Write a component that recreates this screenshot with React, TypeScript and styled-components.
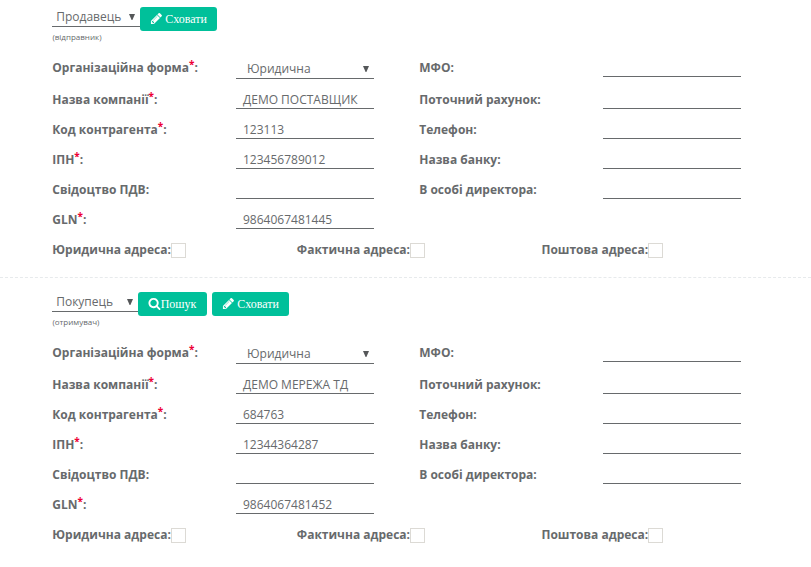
import React from "react";
import styled, { createGlobalStyle } from "styled-components";

const GlobalStyle = createGlobalStyle`
  * { box-sizing: border-box; }
  body {
    margin: 0;
    background: #fff;
    color: #676a6c;
    font-family: "Open Sans", "Noto Sans", sans-serif;
    font-size: 12px;
    overflow: hidden;
  }
`;

const Section = styled.section<{ $divided?: boolean }>`
  height: ${(p) => (p.$divided ? 278 : 285)}px;
  margin-bottom: ${(p) => (p.$divided ? 7 : 0)}px;
  padding: 7px 0 0 52px;
  border-bottom: ${(p) => (p.$divided ? "1px dashed #e7eaec" : "none")};
`;

const Header = styled.header`
  display: flex;
  align-items: flex-start;
  height: 24px;
`;

const RoleSelect = styled.div<{ $width: number }>`
  display: flex;
  justify-content: space-between;
  width: ${(p) => p.$width}px;
  height: 20px;
  padding: 0 5px 0 4.2px;
  border-bottom: 1px solid #676a6c;
  line-height: 19px;
`;

const Arrow = styled.svg`
  width: 6px;
  height: 6px;
  margin-top: 7px;
  flex: none;
  fill: #555759;
`;

const Button = styled.button<{ $width: number; $gap: number }>`
  display: flex;
  align-items: center;
  justify-content: center;
  gap: ${(p) => p.$gap}px;
  width: ${(p) => p.$width}px;
  height: 24px;
  margin: 0 5px 0 0;
  padding: 0;
  border: 0;
  border-radius: 3px;
  background: #00c09a;
  color: #fff;
  font: 12px/24px "Liberation Serif", serif;
`;

const Icon = styled.svg`
  width: 13px;
  height: 13px;
  margin: -1px -0.5px 0;
  flex: none;
  fill: currentColor;
`;

const Note = styled.div`
  height: 22px;
  padding-left: 0.4px;
  line-height: 12px;
  font-size: 8px;
`;

const Fields = styled.div`
  display: grid;
  grid-template-columns: 184px 138px 45px 184px 138px;
  grid-template-rows: 32px repeat(5, 30px);
`;

const Label = styled.label<{ $right?: boolean; $first?: boolean }>`
  grid-column: ${(p) => (p.$right ? 4 : 1)};
  align-self: center;
  padding-left: 0.25px;
  padding-bottom: ${(p) => (p.$first ? 2 : 0)}px;
  font-weight: 700;
  line-height: 20px;
  white-space: nowrap;
`;

const Star = styled.span`
  color: #ed0035;
  font-size: 10px;
  line-height: 0;
  position: relative;
  top: -4px;
`;

const Value = styled.div<{ $right?: boolean; $select?: boolean }>`
  grid-column: ${(p) => (p.$right ? 5 : 2)};
  display: flex;
  justify-content: space-between;
  height: ${(p) => (p.$select ? 26 : 24)}px;
  padding: ${(p) => (p.$select ? "6px 5px 0 11px" : "5px 7px 0")};
  border-bottom: 1px solid #676a6c;
  line-height: 20px;
  white-space: nowrap;
`;

const Addresses = styled.div`
  display: grid;
  grid-template-columns: 244.6px 244.6px 1fr;
  height: 30px;
`;

const Address = styled.label`
  display: flex;
  align-items: center;
  height: 28px;
  padding-left: 0.25px;
  font-weight: 700;
`;

const Box = styled.span`
  width: 15px;
  height: 15px;
  margin-top: 3px;
  border: 1px solid #dcdad5;
`;

const Down = () => (
  <Arrow viewBox="0 0 6 6"><path d="M0 0H6L3.4 6H2.6Z" /></Arrow>
);

const Pencil = () => (
  <Icon viewBox="0 0 1792 1792">
    <path d="M491 1536l91-91-235-235-91 91v107h128v128h107zm523-928q0-22-22-22-10 0-17 7l-542 542q-7 7-7 17 0 22 22 22 10 0 17-7l542-542q7-7 7-17zm-54-192l416 416-832 832h-416v-416zm683 96q0 53-37 90l-166 166-416-416 166-165q36-38 90-38 53 0 91 38l235 234q37 39 37 91z" />
  </Icon>
);

const Search = () => (
  <Icon viewBox="0 0 1792 1792">
    <path d="M1216 832q0-185-131.5-316.5t-316.5-131.5-316.5 131.5-131.5 316.5 131.5 316.5 316.5 131.5 316.5-131.5 131.5-316.5zm512 832q0 52-38 90t-90 38q-54 0-90-38l-343-342q-179 124-399 124-143 0-273.5-55.5t-225-150-150-225-55.5-273.5 55.5-273.5 150-225 225-150 273.5-55.5 273.5 55.5 225 150 150 225 55.5 273.5q0 220-124 399l343 343q37 37 37 90z" />
  </Icon>
);

const rows = [
  { left: "Організаційна форма", required: true, right: "МФО:" },
  { left: "Назва компанії", required: true, right: "Поточний рахунок:" },
  { left: "Код контрагента", required: true, right: "Телефон:" },
  { left: "ІПН", required: true, right: "Назва банку:" },
  { left: "Свідоцтво ПДВ", required: false, right: "В особі директора:" },
  { left: "GLN", required: true, right: "" },
];

interface PartyProps {
  role: string;
  note: string;
  selectWidth: number;
  values: string[];
  searchable?: boolean;
  divided?: boolean;
}

function Party({ role, note, selectWidth, values, searchable, divided }: PartyProps) {
  return (
    <Section $divided={divided}>
      <Header>
        <RoleSelect $width={selectWidth}>{role}<Down /></RoleSelect>
        {searchable && <Button $width={69} $gap={0}><Search />Пошук</Button>}
        <Button $width={77} $gap={3}><Pencil />Сховати</Button>
      </Header>
      <Note>({note})</Note>
      <Fields>
        {rows.map((row, i) => (
          <React.Fragment key={row.left}>
            <Label $first={i === 0}>{row.left}{row.required && <Star>*</Star>}:</Label>
            <Value $select={i === 0}>{values[i]}{i === 0 && <Down />}</Value>
            {row.right && <Label $right $first={i === 0}>{row.right}</Label>}
            {row.right && <Value $right />}
          </React.Fragment>
        ))}
      </Fields>
      <Addresses>
        <Address>Юридична адреса:<Box /></Address>
        <Address>Фактична адреса:<Box /></Address>
        <Address>Поштова адреса:<Box /></Address>
      </Addresses>
    </Section>
  );
}

export default function App() {
  return (
    <>
      <GlobalStyle />
      <Party
        divided
        role="Продавець"
        note="відправник"
        selectWidth={88}
        values={["Юридична", "ДЕМО ПОСТАВЩИК", "123113", "123456789012", "", "9864067481445"]}
      />
      <Party
        searchable
        role="Покупець"
        note="отримувач"
        selectWidth={86}
        values={["Юридична", "ДЕМО МЕРЕЖА ТД", "684763", "12344364287", "", "9864067481452"]}
      />
    </>
  );
}
